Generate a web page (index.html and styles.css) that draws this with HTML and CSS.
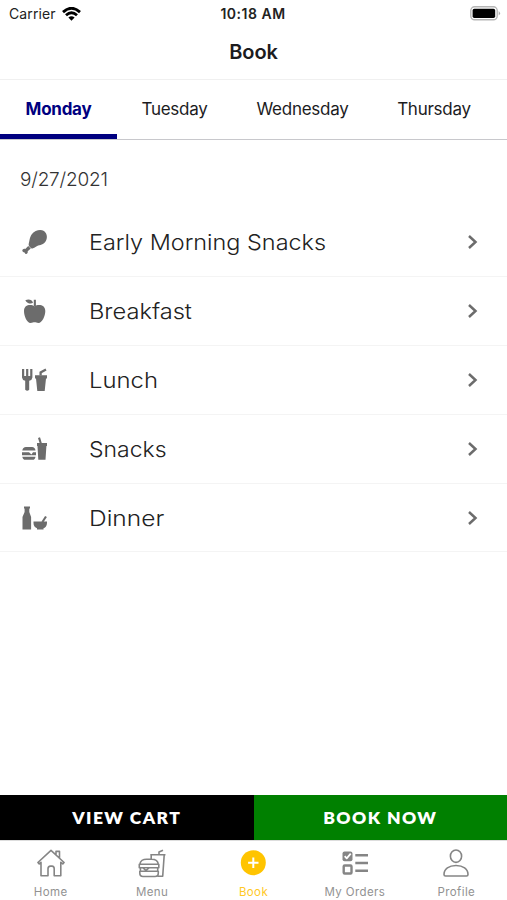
FILE: index.html
```html
<!DOCTYPE html>
<html lang="en">
<head>
<meta charset="utf-8">
<title>Book</title>
<link rel="stylesheet" href="styles.css">
</head>
<body>
<div class="app">
  <div class="status">
    <div class="carrier"><span>Carrier</span>
      <svg width="19" height="14" viewBox="0 0 19 14"><g fill="none" stroke="#000" stroke-width="2.800"><path d="M1 5.100Q9.500-2.600 18 5.100"/><path d="M4 8.300Q9.500 3.200 15 8.300"/></g><path d="M6.400 10.500Q9.500 8 12.600 10.500L9.500 13.700Z"/></svg>
    </div>
    <div class="clock">10:18 AM</div>
    <svg class="battery" width="31" height="15" viewBox="0 0 31 15"><rect x=".8" y=".8" width="26.400" height="13" rx="3.800" fill="#fff" stroke="#b5b5b5" stroke-width="1.400"/><rect x="2.600" y="2.700" width="22.600" height="9.300" rx="1.700"/><path d="M28.700 5Q31.400 7.300 28.700 9.600Z" fill="#aaa"/></svg>
  </div>
  <h1 class="title">Book</h1>
  <div class="days">
    <div class="day active"><span>Monday</span></div>
    <div class="day tue"><span>Tuesday</span></div>
    <div class="day wed"><span>Wednesday</span></div>
    <div class="day thu"><span>Thursday</span></div>
  </div>
  <div class="date">9/27/2021</div>
  <div class="meals">
    <div class="meal">
      <svg class="icon" width="28" height="28" viewBox="0 0 28 28"><path d="M9.500 18.800Q8 17.500 8.800 15.200C9.600 13.300 9.300 9.500 12 6C15 2.200 20.500 .8 24 3C27.700 5.800 27.700 11.200 25 14.300C22.500 17.200 18.500 17 16.300 18.600Q13.500 21 11.200 20.200Z"/><path d="M8.200 17.900 10.800 20.500 7.700 23.300C8.200 25 6.800 26.500 5.300 25.700L4.600 24.400C2.700 24.600 1.600 22.600 2.700 21.500C3.600 20.600 4.700 20.900 5.300 21Z"/></svg>
      <span class="name"><span class="label early">Early Morning Snacks</span></span>
      <svg class="chev" width="12" height="16" viewBox="0 0 12 16"><path d="M2 2 8.500 8 2 14"/></svg>
    </div>
    <div class="meal">
      <svg class="icon" width="28" height="28" viewBox="0 0 28 28"><path d="M14.500 9.300C18 7 25.300 7.300 25.300 14C25.300 19 22 26 18.500 26C16.500 26 16 25.300 14.600 25.300C13.200 25.300 12.500 26 10.500 26C7 26 4 19 4 14C4 7.300 11 7 14.500 9.300Z"/><path d="M13.800 9V2.800H15.900V9ZM13 5.800C11 7.500 7 6.500 5.300 3.200C8.500 1.700 12 2.300 13 5.800Z"/></svg>
      <span class="name"><span class="label breakfast">Breakfast</span></span>
      <svg class="chev" width="12" height="16" viewBox="0 0 12 16"><path d="M2 2 8.500 8 2 14"/></svg>
    </div>
    <div class="meal">
      <svg class="icon" width="28" height="28" viewBox="0 0 28 28"><path d="M2 3H4.200V10H6.100V3H8.300V10H10.200V3H12.400V11.500Q12.200 14 9.200 14.800V23.700Q7.200 25.800 5.200 23.700V14.800Q2.200 14 2 11.500Z"/><path d="M15 9.300H27V12.500H26L24.700 25H17.300L16 12.500H15Z"/><path d="M20.600 9.500V6.500L26 3.600" fill="none" stroke="#6c6c6c" stroke-width="2.300"/></svg>
      <span class="name"><span class="label lunch">Lunch</span></span>
      <svg class="chev" width="12" height="16" viewBox="0 0 12 16"><path d="M2 2 8.500 8 2 14"/></svg>
    </div>
    <div class="meal">
      <svg class="icon" width="28" height="28" viewBox="0 0 28 28"><path d="M2.300 15.500Q2.800 12 6 12H12Q15 12 15.500 15.500ZM2.300 21.700H15.500Q15.200 24.800 12.500 24.800H5.500Q2.700 24.800 2.300 21.700ZM2 17.300H9L11.500 19.500 13 17.300H16V20.300H2Z"/><path d="M17 8H27V11H26.400L25.500 24.800H18.300L17.500 11H17Z"/><path d="M21 9 19 2.600" fill="none" stroke="#6c6c6c" stroke-width="2.100"/></svg>
      <span class="name"><span class="label snacks">Snacks</span></span>
      <svg class="chev" width="12" height="16" viewBox="0 0 12 16"><path d="M2 2 8.500 8 2 14"/></svg>
    </div>
    <div class="meal">
      <svg class="icon" width="28" height="28" viewBox="0 0 28 28"><path d="M4 2.400H10V4.500H9.300V8L11.100 13V25.400H2.500V13L4.600 8V4.500H4Z"/><path d="M13.500 17.500H27V19C27 22 25 24 23.500 24.300V25.400H17V24.300C15 23.600 13.500 21.800 13.500 19Z"/><path d="M22.400 18 26 12.500" fill="none" stroke="#6c6c6c" stroke-width="2.100"/></svg>
      <span class="name"><span class="label dinner">Dinner</span></span>
      <svg class="chev" width="12" height="16" viewBox="0 0 12 16"><path d="M2 2 8.500 8 2 14"/></svg>
    </div>
  </div>
  <div class="actions">
    <div class="btn cart">VIEW CART</div>
    <div class="btn book">BOOK NOW</div>
  </div>
  <div class="nav">
    <div class="item">
      <svg width="30" height="30" viewBox="0 0 30 30"><path d="M1.900 13.500 15 1.400 28.100 13.500 26.800 14.900 24.800 13.300V26.800H18.200V19.800Q18.200 17.100 16 17.100H14.500Q12 17.100 12 19.800V26.800H5V13.300L3.200 14.900ZM20 6V2.400H23.500V9.200"/></svg>
      <span>Home</span>
    </div>
    <div class="item">
      <svg width="30" height="30" viewBox="0 0 30 30"><path d="M2.800 15.300C3.200 12 6.300 10.200 9.500 10.200H14.500C18 10.200 21 12 21.300 15.300ZM2.300 15.300H21.800V18.700H2.300ZM2.800 22.200H21.300V24Q21.300 27.500 18 27.500H6Q2.800 27.500 2.800 24ZM3.400 18.700V22.200M20.700 18.700V22.200M6 19 9 21.500 12 19M14.200 10V6M13.300 5.800H28.500M27.200 6 25.700 27.200H20.500M22 5.800V3L26 1.200"/></svg>
      <span>Menu</span>
    </div>
    <div class="item on">
      <svg width="30" height="30" viewBox="0 0 30 30"><circle cx="14.300" cy="13.700" r="12.500" fill="#ffc400" stroke="none"/><path d="M14.300 8.500V18.900M9.100 13.700H19.500" stroke="#fff" stroke-width="2"/></svg>
      <span>Book</span>
    </div>
    <div class="item">
      <svg width="30" height="30" viewBox="0 0 30 30"><rect x="2.500" y="2.500" width="10" height="9.800" rx="2" fill="#858585" stroke="none"/><path d="M4.700 7.200 6.700 9.300 10.700 4.700" stroke="#fff" stroke-width="1.800"/><rect x="3.700" y="16.500" width="7.800" height="8" rx="1" stroke-width="2.400"/><path d="M15.300 6.300H28M15.300 14H28M15.300 21.800H28" stroke-width="2.400"/></svg>
      <span>My Orders</span>
    </div>
    <div class="item">
      <svg width="30" height="30" viewBox="0 0 30 30"><ellipse cx="15" cy="7.200" rx="5.600" ry="6.200"/><path d="M3 25.500C3 20 8 16.500 15 16.500S27 20 27 25.500Q27 27 25.500 27H4.500Q3 27 3 25.500Z"/></svg>
      <span>Profile</span>
    </div>
  </div>
</div>
</body>
</html>
```
FILE: styles.css
```css
* { box-sizing: border-box; }
body { margin: 0; background: #fff; font-family: Inter, "Liberation Sans", sans-serif; }
svg { display: block; flex: none; }
.app { width: 507px; height: 900px; display: flex; flex-direction: column; overflow: hidden; }
.status { height: 27px; display: grid; grid-template-columns: 1fr auto 1fr; align-items: center; padding: 0 6px 0 9px; color: #222; }
.carrier { display: flex; align-items: center; gap: 6px; font-size: 14px; letter-spacing: .1px; }
.clock { font-size: 14px; font-weight: 600; letter-spacing: .5px; margin-left: -4px; }
.battery { justify-self: end; }
.title { height: 52px; margin: 0; line-height: 51px; font-size: 20px; font-weight: 600; text-align: center; color: #1c1c1e; letter-spacing: -.1px; }
.days { height: 61px; display: flex; border-top: 1px solid #f0f0f0; border-bottom: 1px solid #c8c8cc; font-size: 17px; line-height: 58px; color: #1c1c1e; letter-spacing: -.25px; }
.day { height: 59px; flex: none; text-align: center; white-space: nowrap; }
.active { width: 117px; color: #000080; font-weight: 700; border-bottom: 5px solid #000080; }
.tue { width: 115px; }
.wed { width: 141px; }
.thu { width: 122px; }
.date { height: 68px; padding-left: 20px; line-height: 79px; font-size: 19px; color: #333; font-weight: 300; letter-spacing: -.2px; }
.meals { flex: 1; }
.meal { height: 68.9px; display: flex; align-items: center; padding: 0 28px 0 20px; border-bottom: 1px solid #f4f4f4; }
.icon { fill: #6c6c6c; }
.name { flex: 1; margin-left: 41px; font-size: 22px; font-weight: 300; color: #222; white-space: nowrap; }
.label { display: inline-block; transform-origin: left; }
.early { transform: scaleX(1.065); }
.breakfast { transform: scaleX(1.075); }
.lunch { transform: scaleX(1.085); }
.snacks { transform: scaleX(1.045); }
.dinner { transform: scaleX(1.115); }
.chev { fill: none; stroke: #6c6c6c; stroke-width: 2.5; }
.actions { height: 45px; display: flex; }
.btn { flex: 1; text-align: center; line-height: 45px; font-family: Lato, sans-serif; font-size: 17.5px; font-weight: 800; letter-spacing: 1.4px; color: #fff; }
.cart { background: #000; }
.book { background: #008000; }
.nav { height: 60px; display: flex; padding-top: 8px; border-top: 1px solid #ddd; }
.item { flex: 1; display: flex; flex-direction: column; align-items: center; color: #929292; font-size: 11.5px; letter-spacing: .4px; line-height: 15px; gap: 6px; }
.item svg { fill: none; stroke: #858585; stroke-width: 1.6; stroke-linejoin: round; }
.on { color: #ffc927; }
```
